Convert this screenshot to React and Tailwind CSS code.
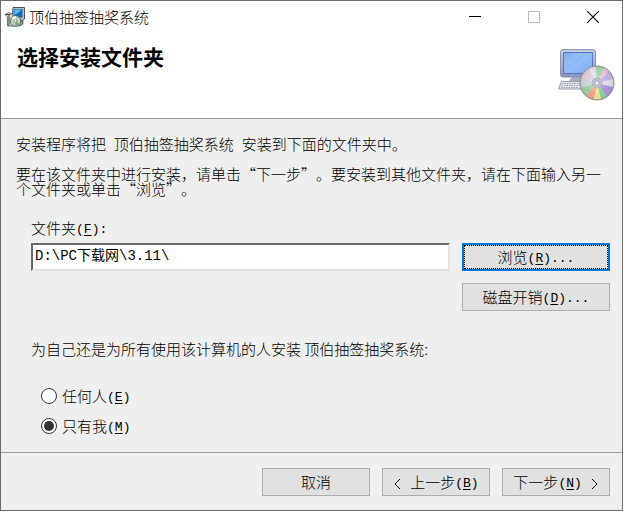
// Installer wizard page: pick the install folder and who the program is installed for.

import { useState } from 'react'
import clsx from 'clsx'

const AUDIENCES = [
  { id: 'everyone', label: '任何人', hotkey: 'E' },
  { id: 'me', label: '只有我', hotkey: 'M' },
]

export default function App() {
  const [folder, setFolder] = useState('D:\\PC下载网\\3.11\\')
  const [audience, setAudience] = useState('me')

  return (
    <div className="flex min-h-screen flex-col border border-[#6b6b6b] bg-[#efefef] font-['Noto_Sans_CJK_SC',sans-serif] text-[15px] leading-5 font-light text-black [text-spacing-trim:space-all]">
      <TitleBar />

      <header className="flex items-start justify-between border-b border-[#9a9a9a] bg-white pt-3 pr-1.5 pb-3.5 pl-4">
        <h1 className="text-[21px] leading-6 font-bold">选择安装文件夹</h1>
        <InstallerArt />
      </header>

      <main className="flex-1 pt-[15px] pr-3 pb-2 pl-[15px]">
        <p>
          安装程序将把
          <Gap />
          顶伯抽签抽奖系统
          <Gap />
          安装到下面的文件夹中。
        </p>
        <p className="mt-3 leading-[15px]">
          要在该文件夹中进行安装，请单击“下一步”。要安装到其他文件夹，请在下面输入另一个文件夹或单击“浏览”。
        </p>

        <div className="mt-[22px] pl-[15px]">
          <label htmlFor="folder" className="block">
            文件夹
            <Hotkey k="F" />
            <Mono>:</Mono>
          </label>
          <div className="mt-[5px] flex items-start gap-3">
            <input
              id="folder"
              type="text"
              value={folder}
              onChange={(e) => setFolder(e.target.value)}
              className="h-7 min-w-0 flex-1 border-2 border-t-[#696969] border-r-[#e3e3e3] border-b-[#e3e3e3] border-l-[#696969] bg-white px-0.5 pb-1.5 font-['Liberation_Mono','Noto_Sans_CJK_SC',monospace] text-sm font-normal outline-none"
            />
            <div className="flex w-[148px] flex-col gap-3">
              <WizardButton focused>
                浏览
                <Hotkey k="R" />
                <Mono>...</Mono>
              </WizardButton>
              <WizardButton>
                磁盘开销
                <Hotkey k="D" />
                <Mono>...</Mono>
              </WizardButton>
            </div>
          </div>
        </div>

        <fieldset className="pl-[15px]">
          <legend className="pt-7">为自己还是为所有使用该计算机的人安装 顶伯抽签抽奖系统:</legend>
          <div className="mt-[22px] flex flex-col pl-2.5">
            {AUDIENCES.map((a) => (
              <label key={a.id} className="flex h-[30px] items-center gap-[5px]">
                <input
                  type="radio"
                  name="audience"
                  value={a.id}
                  checked={audience === a.id}
                  onChange={() => setAudience(a.id)}
                  className="grid size-4 appearance-none place-content-center rounded-full border border-[#333] bg-white before:size-2.5 before:rounded-full checked:before:bg-[#333]"
                />
                <span>
                  {a.label}
                  <Hotkey k={a.hotkey} />
                </span>
              </label>
            ))}
          </div>
        </fieldset>
      </main>

      <footer className="flex justify-end gap-3 border-t border-[#a0a0a0] px-3 pt-[15px] pb-3.5">
        <WizardButton className="w-[108px]">取消</WizardButton>
        <WizardButton className="w-[108px]">
          <ChevronMark d="M6 1L1 6l5 5" />
          <Gap />
          上一步
          <Hotkey k="B" />
        </WizardButton>
        <WizardButton className="w-[108px]">
          下一步
          <Hotkey k="N" />
          <Gap />
          <ChevronMark d="M1 1l5 5-5 5" />
        </WizardButton>
      </footer>
    </div>
  )
}

function TitleBar() {
  return (
    <div className="flex h-[31px] items-center bg-white pl-[3px]">
      <AppIcon />
      <span className="ml-[3px] flex-1">顶伯抽签抽奖系统</span>
      <button aria-label="最小化" className="grid h-full w-[59px] place-items-center">
        <svg className="h-3 w-3" viewBox="0 0 12 12" stroke="#000">
          <path d="M0 5.500h12" />
        </svg>
      </button>
      <button aria-label="最大化" disabled className="grid h-full w-[59px] place-items-center">
        <svg className="h-3 w-3" viewBox="0 0 12 12" fill="none" stroke="#bdbdbd">
          <path d="M.5 .5h11v11H.5z" />
        </svg>
      </button>
      <button aria-label="关闭" className="grid h-full w-[59px] place-items-center">
        <svg className="h-3 w-3" viewBox="0 0 12 12" fill="none" stroke="#000" strokeWidth="1.1">
          <path d="M0 0l12 12M12 0L0 12" />
        </svg>
      </button>
    </div>
  )
}

function WizardButton({ focused = false, className, children }) {
  return (
    <button
      className={clsx(
        'h-7 bg-[#e1e1e1] whitespace-nowrap',
        focused
          ? 'border-2 border-[#0078d7] outline-1 -outline-offset-3 outline-black outline-dotted'
          : 'border border-[#adadad]',
        className,
      )}
    >
      {children}
    </button>
  )
}

function Mono({ children }) {
  return (
    <span className="align-[1px] font-['Liberation_Mono',monospace] text-[13px] leading-none font-normal whitespace-pre">
      {children}
    </span>
  )
}

function Gap() {
  return <Mono> </Mono>
}

function Hotkey({ k }) {
  return (
    <Mono>
      (<u className="underline-offset-2">{k}</u>)
    </Mono>
  )
}

function ChevronMark({ d }) {
  return (
    <svg
      className="mx-px inline-block h-3 w-[7px] align-middle"
      viewBox="0 0 7 12"
      fill="none"
      stroke="#000"
    >
      <path d={d} />
    </svg>
  )
}

// Small title bar icon: monitor, open box and disc
function AppIcon() {
  return (
    <svg className="h-[22px] w-[22px]" viewBox="0 0 22 22">
      <path d="M9 1.5h11.5v11.5l-2 1.5H8z" fill="#b9bdc6" stroke="#4a4f5c" />
      <path d="M10 3h8.5v8.500H9.500z" fill="#1668b8" />
      <path d="M10.500 3.500h7.500l-7.500 6z" fill="#55bdf0" />
      <path d="M8 15h11v3l-3 2H8z" fill="#8a8f9b" stroke="#4d505a" strokeWidth=".7" />
      <path d="M1 8.500l4-2 4 2v11.500H3.500V11z" fill="#d8d8d2" stroke="#5b5b58" strokeWidth=".8" />
      <path d="M1 8.500h5.500M5 8.500V20" stroke="#4a4a48" strokeWidth="1.100" />
      <circle cx="11.500" cy="15" r="5.300" fill="#b9d2bd" stroke="#53745b" strokeWidth=".9" />
      <path d="M11.500 15L8 11.500A5 5 0 0 1 12 10z" fill="#eef6ee" />
      <path d="M11.500 15l4 3.300a5 5 0 0 1-4 1.700z" fill="#6fa47a" />
      <circle cx="11.500" cy="15" r="1.400" fill="#fff" stroke="#53745b" strokeWidth=".6" />
    </svg>
  )
}

// Desktop computer with a disc in front of it
function InstallerArt() {
  return (
    <svg className="h-[60px] w-[60px]" viewBox="0 0 60 60">
      <defs>
        <linearGradient id="screen" x1="0" y1="0" x2="1" y2="1">
          <stop offset="0" stopColor="#6f9fee" />
          <stop offset=".5" stopColor="#92bdf8" />
          <stop offset="1" stopColor="#78a8f2" />
        </linearGradient>
        <linearGradient id="bezel" x1="0" y1="0" x2="0" y2="1">
          <stop offset="0" stopColor="#c9cde0" />
          <stop offset="1" stopColor="#8e94b4" />
        </linearGradient>
        <radialGradient id="shine">
          <stop offset="0" stopColor="#fff" stopOpacity=".5" />
          <stop offset=".6" stopColor="#fff" stopOpacity=".08" />
          <stop offset="1" stopColor="#9a93a8" stopOpacity=".25" />
        </radialGradient>
        <clipPath id="disc">
          <circle cx="39" cy="39" r="17" />
        </clipPath>
      </defs>
      <path d="M16 33h18l3 5H12z" fill="#a9aec2" />
      <rect x="4.500" y="5.500" width="35" height="27.500" rx="2.500" fill="url(#bezel)" stroke="#8f95b3" />
      <rect x="7.500" y="8.500" width="29" height="21" fill="url(#screen)" stroke="#5575c8" />
      <path d="M8 9h20L8 25z" fill="#fff" opacity=".12" />
      <path d="M5.500 37.500h22l-1 7.500H2.500z" fill="#e7e8ee" stroke="#9a9dab" />
      <path d="M6 39.500h18M5.500 41.500h18M5 43.500h17" stroke="#8f92a3" strokeDasharray="1.500 1" strokeWidth=".9" />
      <g transform="translate(2 0)">
        <g clipPath="url(#disc)">
          <circle cx="39" cy="39" r="17" fill="#d3cfdb" />
          <path d="M39 39L27 18h9z" fill="#e6e3ee" />
          <path d="M39 39L38 18l10 2z" fill="#98d6a0" />
          <path d="M39 39L48 20l6 5z" fill="#f0bcd4" />
          <path d="M39 39L54 25l5 9z" fill="#bfaae4" />
          <path d="M39 39L59 35v9z" fill="#dcd9e4" />
          <path d="M39 39L59 44l-8 12z" fill="#a088d8" />
          <path d="M39 39L51 56l-8 3z" fill="#72d07e" />
          <path d="M39 39L44 59h-9z" fill="#f4e284" />
          <path d="M39 39L35 59l-9-5z" fill="#f2987f" />
          <path d="M39 39L26 54l-7-9z" fill="#93cb95" />
          <path d="M39 39L19 45V33z" fill="#c9cfd8" />
          <path d="M39 39L20 32l6-9z" fill="#e2c9d4" />
          <circle cx="39" cy="39" r="17" fill="url(#shine)" />
        </g>
        <circle cx="39" cy="39" r="17" fill="none" stroke="#8f8a98" />
        <circle cx="39" cy="39" r="5" fill="#c3c3d2" stroke="#a3a3b3" strokeWidth=".8" />
        <circle cx="39" cy="39" r="2.200" fill="#f2f2f6" stroke="#9292a6" strokeWidth=".8" />
      </g>
    </svg>
  )
}
